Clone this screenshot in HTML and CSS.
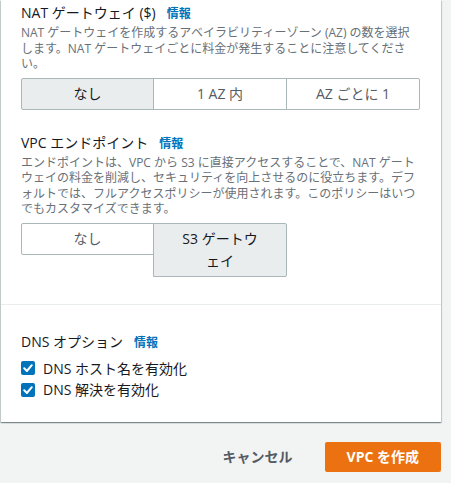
FILE: index.html
```html
<!DOCTYPE html>
<html lang="ja">
<head>
<meta charset="utf-8">
<title>VPC を作成</title>
<link rel="stylesheet" href="styles.css">
</head>
<body>
<div class="page">
  <div class="card">
    <div class="section section-top">
      <div class="field">
        <div class="label">NAT ゲートウェイ ($)<a class="info">情報</a></div>
        <div class="desc">NAT ゲートウェイを作成するアベイラビリティーゾーン (AZ) の数を選択します。NAT ゲートウェイごとに料金が発生することに注意してください。</div>
        <div class="segmented">
          <div class="seg selected">なし</div>
          <div class="seg">1 AZ 内</div>
          <div class="seg">AZ ごとに 1</div>
        </div>
      </div>
      <div class="field field-gap">
        <div class="label">VPC エンドポイント<a class="info">情報</a></div>
        <div class="desc">エンドポイントは、VPC から S3 に直接アクセスすることで、NAT ゲートウェイの料金を削減し、セキュリティを向上させるのに役立ちます。デフォルトでは、フルアクセスポリシーが使用されます。このポリシーはいつでもカスタマイズできます。</div>
        <div class="segmented">
          <div class="seg">なし</div>
          <div class="seg selected">S3 ゲートウェイ</div>
        </div>
      </div>
    </div>
    <div class="section section-dns">
      <div class="label">DNS オプション<a class="info">情報</a></div>
      <div class="checks">
        <label class="check">
          <span class="box"><svg width="14" height="14" viewBox="0 0 14 14"><polyline points="3.2,7.3 5.9,10 10.8,4.2" fill="none" stroke="#fff" stroke-width="2" stroke-linecap="round" stroke-linejoin="round"/></svg></span>
          <span>DNS ホスト名を有効化</span>
        </label>
        <label class="check">
          <span class="box"><svg width="14" height="14" viewBox="0 0 14 14"><polyline points="3.2,7.3 5.9,10 10.8,4.2" fill="none" stroke="#fff" stroke-width="2" stroke-linecap="round" stroke-linejoin="round"/></svg></span>
          <span>DNS 解決を有効化</span>
        </label>
      </div>
    </div>
  </div>
  <div class="actions">
    <button class="btn btn-link">キャンセル</button>
    <button class="btn btn-primary">VPC を作成</button>
  </div>
</div>
</body>
</html>
```
FILE: styles.css
```css
html, body {
  margin: 0;
  padding: 0;
  background: #f2f3f3;
}
body {
  font-family: "Open Sans", "Noto Sans CJK JP", sans-serif;
  color: #16191f;
  font-size: 14px;
}
.page {
  width: 440px;
  margin-left: 1px;
}
.card {
  background: #fff;
  box-shadow: 0 1px 1px 0 rgba(0, 28, 36, 0.3), 1px 1px 1px 0 rgba(0, 28, 36, 0.15), -1px 1px 1px 0 rgba(0, 28, 36, 0.15);
}
.section-top {
  padding: 2px 20px 27px;
}
.section-dns {
  border-top: 1px solid #eaeded;
  padding: 26px 20px 21px;
}
.field-gap {
  margin-top: 22px;
}
.label {
  font-size: 14px;
  line-height: 22px;
  color: #16191f;
}
.info {
  color: #0073bb;
  font-weight: 700;
  font-size: 12px;
  margin-left: 11px;
}
.desc {
  font-size: 12px;
  line-height: 15.5px;
  color: #687078;
  margin-bottom: 6px;
}
.segmented {
  display: grid;
  grid-template-columns: repeat(3, 133px);
  align-items: start;
}
.seg {
  border: 1px solid #aab7b8;
  padding: 4px 24px;
  line-height: 22px;
  text-align: center;
  color: #545b64;
  background: #fff;
  margin-left: -1px;
}
.seg:first-child {
  margin-left: 0;
  border-radius: 2px 0 0 2px;
}
.seg:last-child {
  border-radius: 0 2px 2px 0;
}
.seg.selected {
  background: #eaeded;
  color: #16191f;
  position: relative;
}
.checks {
  margin-top: 4px;
}
.check {
  display: flex;
  align-items: center;
  gap: 8px;
  height: 21.7px;
  line-height: 21.7px;
}
.box {
  width: 14px;
  height: 14px;
  border-radius: 2px;
  background: #0073bb;
  display: block;
}
.box svg {
  display: block;
}
.actions {
  display: flex;
  justify-content: flex-end;
  gap: 12px;
  margin-top: 20px;
}
.btn {
  font-family: inherit;
  font-size: 14px;
  font-weight: 700;
  line-height: 22px;
  padding: 4px 20px;
  border: 0;
  border-radius: 2px;
  cursor: pointer;
}
.btn-link {
  background: transparent;
  color: #545b64;
}
.btn-primary {
  background: #ec7211;
  color: #fff;
  padding: 4px 22px;
}
```
